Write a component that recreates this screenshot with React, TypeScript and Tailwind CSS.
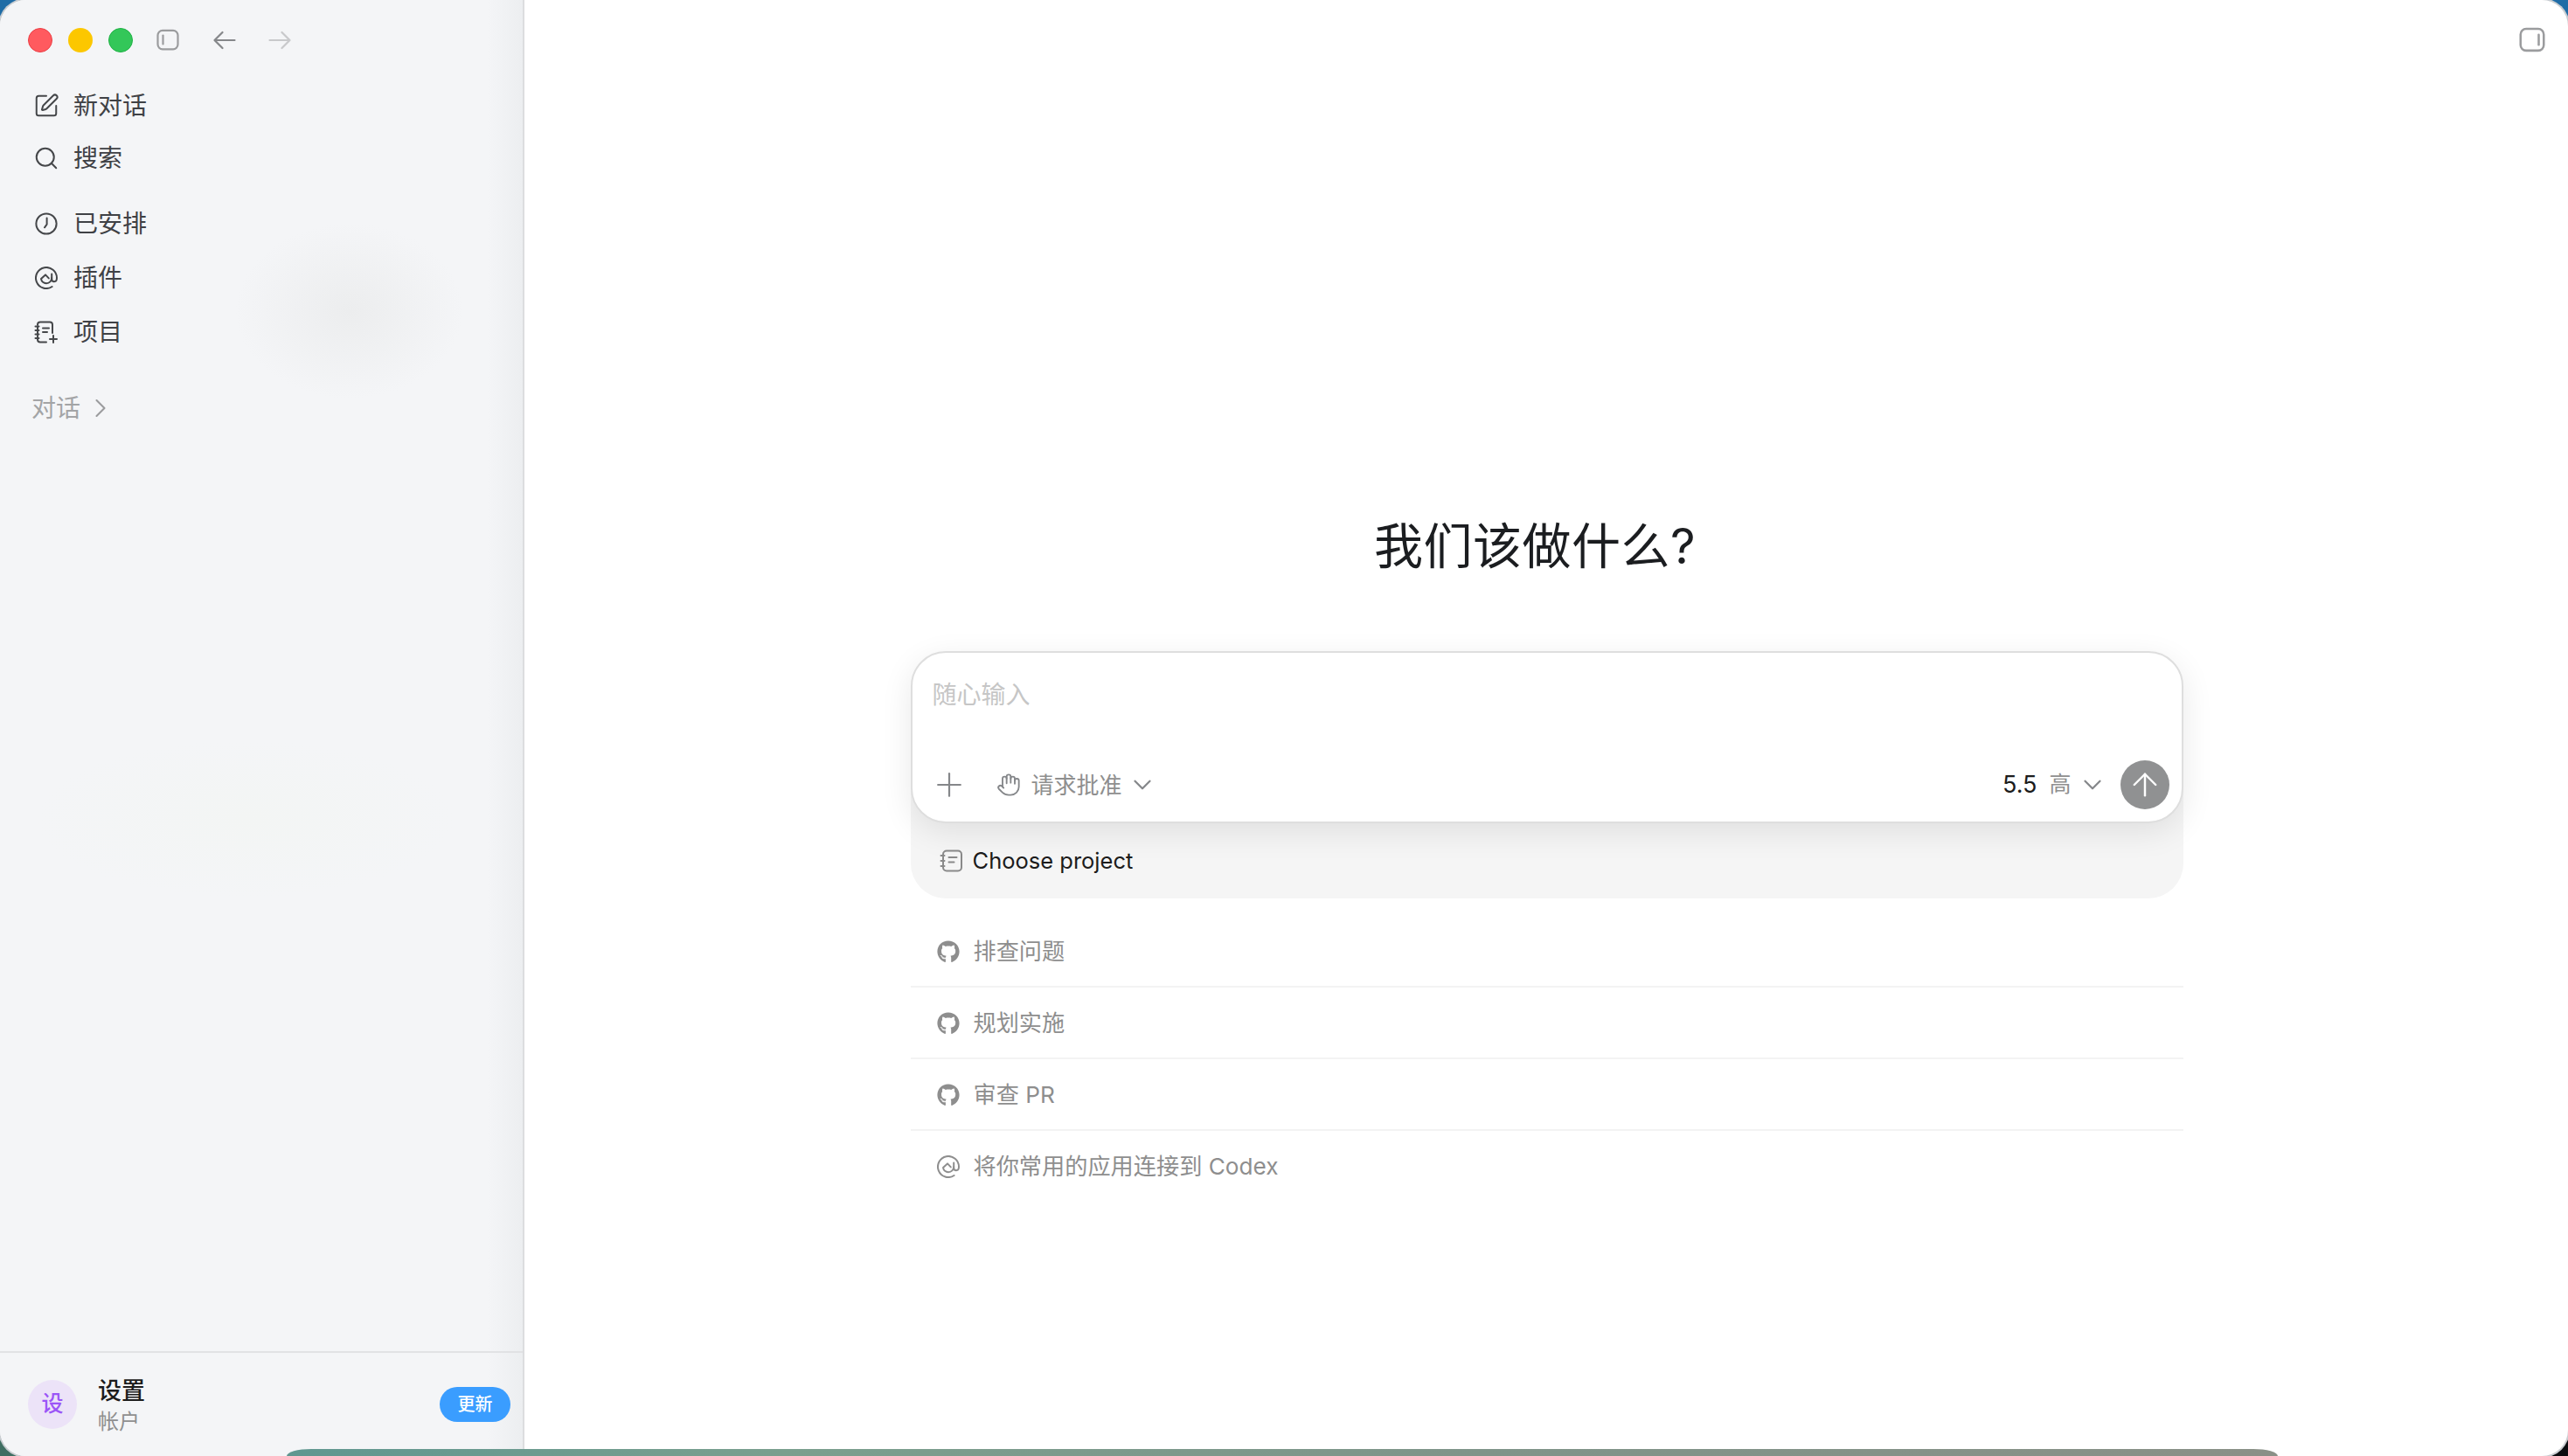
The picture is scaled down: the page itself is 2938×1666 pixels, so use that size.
import React from 'react';
import { ArrowUp, ChevronDown, ChevronRight, Hand, Plus, Search, SquarePen } from 'lucide-react';
import { FaGithub } from 'react-icons/fa';

const PanelIcon = ({ bar, size = 26 }: { bar: 'left' | 'right', size?: number }) => (
  <svg width={size} height={size} viewBox="0 0 26 26" fill="none" stroke="#9b9c9e" strokeWidth="2.2" strokeLinecap="round">
    <rect x="1.5" y="1.8" width="23" height="21.5" rx="5.5" />
    {bar === 'left' ? <path d="M7.5 7.5v10" /> : <path d="M19.5 7.5v10" />}
  </svg>
);

const NavArrow = ({ dir, color }: { dir: 'left' | 'right', color: string }) => (
  <svg width="26" height="22" viewBox="0 0 26 22" fill="none" stroke={color} strokeWidth="2.2" strokeLinecap="round" strokeLinejoin="round">
    {dir === 'left' ? <path d="M24.5 11h-23M10.5 2l-9 9 9 9" /> : <path d="M1.5 11h23M15.5 2l9 9-9 9" />}
  </svg>
);

const ClockIcon = () => (
  <svg width="26" height="26" viewBox="0 0 26 26" fill="none" stroke="#45474a" strokeWidth="2" strokeLinecap="round" strokeLinejoin="round" className="shrink-0">
    <circle cx="13" cy="13" r="11.6" />
    <path d="M13.6 6.5v7.2l-2.6 3.6" />
  </svg>
);

const PluginIcon = ({ color = '#45474a', size = 26 }: { color?: string, size?: number }) => (
  <svg width={size} height={size} viewBox="0 0 26 26" fill="none" stroke={color} strokeWidth="2" strokeLinecap="round" strokeLinejoin="round" className="shrink-0">
    <path d="M19.6 23A12 12 0 1 1 25 13c0 2.8-1.4 4.2-3 4.2s-2.8-1.1-2.8-3.2V8.4" />
    <path d="M19.2 13a6.2 6.2 0 0 1-6.2 6.2 6.2 6.2 0 0 1-6-5.2l5-4.6 3.8 4" />
  </svg>
);

const NotebookIcon = ({ color, plus }: { color: string, plus?: boolean }) => (
  <svg width="28" height="26" viewBox="0 0 28 26" fill="none" stroke={color} strokeWidth="2" strokeLinecap="round" strokeLinejoin="round" className="shrink-0">
    {plus ? (
      <>
        <path d="M4 5V4.5A3 3 0 0 1 7 1.5h11a3 3 0 0 1 3 3V14" />
        <path d="M14 24.5H7a3 3 0 0 1-3-3V21" />
        <path d="M1.5 6.5h4M1.5 11h4M1.5 15.5h4M1.5 20h4M4 7v3M4 12v3M4 17v3" />
        <path d="M10 8.5h7M10 13h5M22 17v8M18 21h8" />
      </>
    ) : (
      <>
        <rect x="4" y="1.5" width="21" height="23" rx="4" />
        <path d="M1.5 7h4M1.5 13h4M1.5 19h4M10.5 9h9M10.5 14.5h6" />
      </>
    )}
  </svg>
);

const NavRow = ({ icon, label, tall }: { icon: React.ReactNode, label: string, tall?: boolean }) => (
  <div className={`flex items-center gap-[19px] pl-10 text-[28px] text-[#3f4145] ${tall ? 'h-[62px]' : 'h-[60px]'}`}>
    <span className="flex w-[25px] justify-center">{icon}</span>
    <span>{label}</span>
  </div>
);

const Suggestion = ({ icon, label, last }: { icon: React.ReactNode, label: string, last?: boolean }) => (
  <div className={`flex h-[82px] items-center gap-4 pl-[31px] text-[26.2px] text-[#8e8e8e] ${last ? '' : 'border-b-2 border-[#f3f3f3] pt-[2px]'}`}>
    <span className="flex w-[25px] justify-center">{icon}</span>
    <span>{label}</span>
  </div>
);

export default function App() {
  const github = <FaGithub size={26} color="#8e8e8e" className="shrink-0" />;

  return (
    <div className="relative h-[1666px] w-full overflow-hidden bg-[conic-gradient(#1f6ca6_0_25%,#0a0d10_25%_50%,#3f6e62_50%_75%,#1f6ca6_75%_100%)] font-['Inter','Noto_Sans_CJK_SC',sans-serif]">
      <div className="flex h-full overflow-hidden rounded-[30px] bg-white shadow-[0_0_0_2px_#c9cdd1]">
        {/* Sidebar */}
        <aside className="flex w-[600px] shrink-0 flex-col border-r-2 border-[#dcdddf] bg-[radial-gradient(ellipse_130px_100px_at_400px_356px,#ecedee,transparent),radial-gradient(ellipse_240px_90px_at_281px_937px,#f3f5f4,transparent),linear-gradient(to_left,#eceef0,#f4f5f7_40px)]">
          <div className="flex h-[91px] items-start pt-8 pl-8">
            <span className="h-7 w-7 rounded-full border border-[#ec3e45] bg-[#ff5a5f]" />
            <span className="ml-[18px] h-7 w-7 rounded-full bg-[#fcc700]" />
            <span className="ml-[18px] h-7 w-7 rounded-full border border-[#1fb245] bg-[#33c759]" />
            <span className="ml-[27px] flex h-7 items-center"><PanelIcon bar="left" /></span>
            <span className="ml-[39px] flex h-7 items-center"><NavArrow dir="left" color="#85878a" /></span>
            <span className="ml-[37px] flex h-7 items-center"><NavArrow dir="right" color="#c8c9cb" /></span>
          </div>

          <NavRow icon={<SquarePen size={30} strokeWidth={1.6} color="#45474a" className="shrink-0" />} label="新对话" />
          <NavRow icon={<Search size={30} strokeWidth={1.6} color="#45474a" className="shrink-0" />} label="搜索" />
          <div className="mt-[14px]">
            <NavRow tall icon={<ClockIcon />} label="已安排" />
            <NavRow tall icon={<PluginIcon />} label="插件" />
            <NavRow tall icon={<NotebookIcon color="#45474a" plus />} label="项目" />
          </div>

          <div className="mt-9 flex h-10 items-center pl-[36px] text-[28px] text-[#a3a4a6]">
            <span>对话</span>
            <ChevronRight size={36} strokeWidth={1.4} color="#9a9b9d" className="ml-[5px]" />
          </div>

          <div className="mt-auto flex h-[120px] items-center border-t-2 border-[#e1e2e4] pr-[14px] pl-8">
            <div className="flex h-14 w-14 items-center justify-center rounded-full bg-[#ece3f8] text-[25px] font-medium text-[#9b55f7]">设</div>
            <div className="mt-1 ml-[24px] flex flex-col">
              <span className="text-[27px] leading-[35px] font-medium text-[#1c1c1c]">设置</span>
              <span className="text-[24px] leading-[35px] text-[#8f8f8f]">帐户</span>
            </div>
            <div className="ml-auto flex h-10 w-[81px] items-center justify-center rounded-full bg-[#3a9dff] text-[20px] font-medium text-white">更新</div>
          </div>
        </aside>

        {/* Main */}
        <main className="flex flex-1 flex-col">
          <div className="flex h-[60px] justify-end pt-[31px] pr-[26px]">
            <PanelIcon bar="right" size={30} />
          </div>

          <div className="flex flex-col items-center">
            <h1 className="mt-[525px] mr-[26px] text-[56px] leading-[80px] font-normal tracking-[0.5px] text-[#1b1d20]">我们该做什么?</h1>

            <div className="mt-20 ml-[1px] w-[1456px]">
              <div className="relative z-10 flex h-[197px] flex-col justify-between rounded-[40px] border-2 border-[#dedede] bg-white shadow-[0_10px_36px_rgba(0,0,0,0.09)]">
                <div className="pt-[28px] pl-[23px] text-[28px] leading-[40px] text-[#c6c6c6]">随心输入</div>
                <div className="flex items-center justify-between pr-[14px] pb-[14px] pl-[20px]">
                  <div className="flex items-center text-[26px] text-[#8f8f8f]">
                    <Plus size={44} strokeWidth={1.2} color="#85878a" />
                    <Hand size={28} strokeWidth={1.6} color="#85878a" className="ml-[32px]" />
                    <span className="ml-[12px]">请求批准</span>
                    <ChevronDown size={34} strokeWidth={1.6} color="#85878a" className="ml-[6px]" />
                  </div>
                  <div className="flex items-center">
                    <span className="text-[27px] text-[#1c1c1c]">5.5</span>
                    <span className="ml-[14px] text-[25px] text-[#8f8f8f]">高</span>
                    <ChevronDown size={34} strokeWidth={1.6} color="#85878a" className="ml-[7px]" />
                    <div className="ml-[15px] flex h-14 w-14 items-center justify-center rounded-full bg-[#909192]">
                      <ArrowUp size={42} strokeWidth={1.4} color="#ffffff" />
                    </div>
                  </div>
                </div>
              </div>

              <div className="-mt-11 flex h-[130px] items-center rounded-b-[40px] bg-[#f5f5f5] pt-11 pl-[33px] text-[25.5px] text-[#1c1c1c]">
                <NotebookIcon color="#8a8a8a" />
                <span className="ml-[10px]">Choose project</span>
              </div>

              <div className="mt-5">
                <Suggestion icon={github} label="排查问题" />
                <Suggestion icon={github} label="规划实施" />
                <Suggestion icon={github} label="审查 PR" />
                <Suggestion last icon={<PluginIcon color="#8e8e8e" />} label="将你常用的应用连接到 Codex" />
              </div>
            </div>
          </div>
        </main>
      </div>

      {/* wallpaper showing under the window */}
      <div className="absolute bottom-0 left-[328px] h-2 w-[2278px] rounded-t-[28px_8px] bg-[linear-gradient(to_right,#5f9790,#7a9f8e_25%,#7f9489_60%,#8a9087)]" />
    </div>
  );
}
